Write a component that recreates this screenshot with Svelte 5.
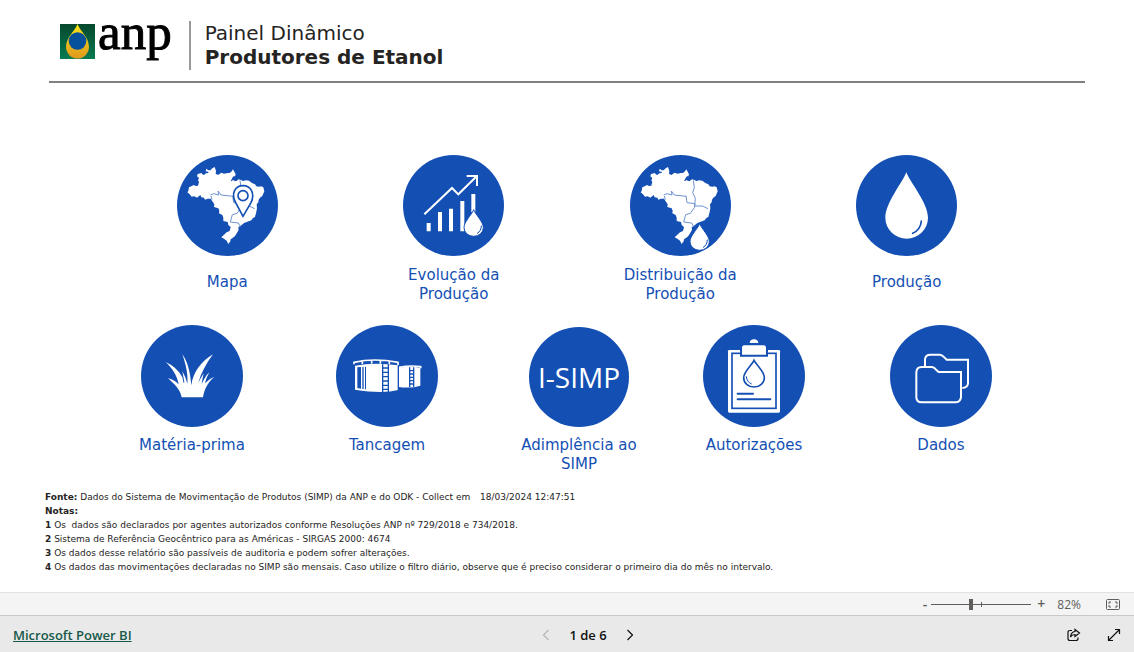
<script>
  const topItems = [
    { icon: "mapa", label: "Mapa" },
    { icon: "evolucao", label: "Evolução da Produção" },
    { icon: "distribuicao", label: "Distribuição da Produção" },
    { icon: "producao", label: "Produção" },
  ]

  const bottomItems = [
    { icon: "materia", label: "Matéria-prima" },
    { icon: "tancagem", label: "Tancagem" },
    { icon: "simp", label: "Adimplência ao SIMP" },
    { icon: "autorizacoes", label: "Autorizações" },
    { icon: "dados", label: "Dados" },
  ]

  const notes = [
    "Os \u00a0dados são declarados por agentes autorizados conforme Resoluções ANP nº 729/2018 e 734/2018.",
    "Sistema de Referência Geocêntrico para as Américas - SIRGAS 2000: 4674",
    "Os dados desse relatório são passíveis de auditoria e podem sofrer alterações.",
    "Os dados das movimentações declaradas no SIMP são mensais. Caso utilize o filtro diário, observe que é preciso considerar o primeiro dia do mês no intervalo.",
  ]

  const viewBoxes = {
    mapa: "24 30 303 303",
    evolucao: "24 30 303 303",
    distribuicao: "30 30 303 303",
    producao: "30 30 303 303",
  }

  let zoom = $state(82)
  let page = $state(1)
  const pages = 6
</script>

{#snippet brazil()}
  <path fill="#fff" d="M55 142 L58 138 L60 127 L67 124 L74 120 L80 123 L87 122 L90 111 L87 106 L90 99 L84 94 L86 87 L98 84 L100 88 L105 90 L111 85 L119 84 L117 80 L110 79 L112 71 L118 76 L124 76 L130 70 L137 66 L141 78 L140 86 L147 90 L157 83 L165 86 L176 84 L182 84 L188 79 L192 73 L196 80 L200 88 L198 94 L190 98 L191 105 L201 109 L209 103 L216 105 L222 108 L231 106 L240 107 L249 114 L258 118 L262 124 L270 125 L277 124 L283 127 L286 139 L280 153 L273 158 L269 164 L268 172 L263 178 L264 190 L262 200 L258 216 L252 219 L247 226 L233 231 L225 234 L218 240 L208 247 L209 254 L206 260 L200 270 L196 275 L185 283 L184 289 L178 297 L173 287 L165 281 L157 277 L165 269 L173 262 L182 258 L185 246 L178 240 L176 231 L163 228 L163 218 L160 210 L150 205 L151 197 L148 190 L135 186 L136 178 L131 170 L125 161 L116 161 L108 164 L105 158 L97 157 L94 150 L84 158 L76 154 L68 155 L62 148 Z"/>
  <path class="state" d="M124 150 L134 146 L149 150 L147 138 L156 150 L193 154 M191 154 L194 173 L218 176 M218 176 L216 188 L204 205 L190 209 L184 231 L208 234 L214 245 M213 106 L216 128 L211 143 L219 160 L217 183 L240 183 L257 191 M126 153 L129 164"/>
  <path fill="none" stroke="#1450b4" stroke-width="4" d="M202 92 L207 99 L201 105 L192 101 M187 108 L196 94"/>
{/snippet}

{#snippet drop()}
  <path fill="#fff" stroke="#1450b4" stroke-width="3" d="M236 194 C229 211 207 230 207 248 A29 26 0 0 0 265 248 C265 230 243 211 236 194 Z"/>
  <path fill="none" stroke="#1450b4" stroke-width="3" stroke-linecap="round" d="M259 243 Q259 258 247 265"/>
{/snippet}

{#snippet tile(item)}
  <button class="tile">
    <span class="disc" class:disc-text={item.icon == "simp"}>
      {#if item.icon == "simp"}
        <span class="simp">I-SIMP</span>
      {:else}
        <svg viewBox={viewBoxes[item.icon] || "27 29 306 306"} aria-hidden="true">
          {#if item.icon == "mapa"}
            {@render brazil()}
            <path fill="#fff" stroke="#1450b4" stroke-width="5" d="M222 214 L200 173 C185 146 198 122 222 122 S259 146 246 173 Z"/>
            <circle cx="222" cy="152" r="15" fill="#fff" stroke="#1450b4" stroke-width="5"/>
          {:else if item.icon == "evolucao"}
            <path fill="none" stroke="#fff" stroke-width="6" d="M88 208 L171 129 L190 148 L245 94 M215 93 H246 V123"/>
            <path fill="#fff" d="M95 234h12v25h-12z M129 201h12v58h-12z M162 191h12v68h-12z M196 168h12v91h-12z M229 147h12v55h-12z"/>
            {@render drop()}
          {:else if item.icon == "distribuicao"}
            <g transform="translate(7 0)">{@render brazil()}</g>
            <g transform="translate(3 42)">{@render drop()}</g>
          {:else if item.icon == "producao"}
            <path fill="#fff" d="M181 82 C170 112 118 174 118 218 A64 63 0 0 0 246 218 C246 174 192 112 181 82 Z"/>
            <path fill="none" stroke="#1450b4" stroke-width="5" stroke-linecap="round" d="M226 228 Q224 254 200 265"/>
          {:else if item.icon == "materia"}
            <path fill="#fff" d="M149 246 C145 223 126 205 108 189 Q125 192 140 207 C135 179 120 158 101 140 Q134 155 151 185 L155 204 L157 200 L151 168 Q161 184 166 205 C169 176 160 143 151 117 C169 143 175 175 178 210 C183 170 209 137 243 117 C222 145 207 174 199 202 Q209 184 215 174 Q211 190 209 207 Q219 183 232 171 Q222 188 219 204 Q231 190 247 184 C227 201 217 222 213 246 Z"/>
            <path fill="none" stroke="#fff" stroke-width="3" d="M184 206 Q187 187 197 174"/>
          {:else if item.icon == "tancagem"}
            <path fill="#fff" d="M84 151 Q142 140 214 150 V224 Q166 236 84 223 Z M215 157 Q250 151 280 157 V211 Q252 220 215 215 Z"/>
            <path fill="none" stroke="#fff" stroke-width="5" d="M81 147 V141 Q142 127 213 141 V149 M106 136V146 M134 133V145 M160 133V145 M187 135V146 M216 156 Q250 149 281 154 V159"/>
            <path fill="#1450b4" d="M91 156 L102 155 V220 L91 218Z M106 155h4v66h-4z M114 154h3v68h-3z"/>
            <path fill="none" stroke="#1450b4" stroke-width="4" d="M167 147V231 M184 147V231 M167 158H184 M167 171H184 M167 184H184 M167 197H184 M167 210H184 M167 222H184 M214 150V224 M248 156V215 M260 156V215 M248 166H260 M248 176H260 M248 186H260 M248 196H260 M248 206H260"/>
          {:else if item.icon == "autorizacoes"}
            <rect x="102" y="104" width="156" height="188" rx="4" fill="#fff"/>
            <rect x="114" y="114" width="132" height="165" fill="#fff" stroke="#1450b4" stroke-width="5"/>
            <path fill="#fff" stroke="#1450b4" stroke-width="6" d="M141 121 V98 Q141 87 151 87 H209 Q219 87 219 98 V121 Z"/>
            <path fill="#fff" d="M167 83 Q168 72 180 72 T193 83 Z"/>
            <path fill="#fff" stroke="#1450b4" stroke-width="5" d="M180 135 C174 149 149 168 149 187 A31 28 0 0 0 211 187 C211 168 187 149 180 135 Z"/>
            <path fill="none" stroke="#1450b4" stroke-width="3" d="M157 183 Q158 200 173 206"/>
            <path fill="none" stroke="#1450b4" stroke-width="6" stroke-linecap="round" d="M131 235H177 M131 252H229"/>
          {:else}
            <path fill="none" stroke="#fff" stroke-width="6" d="M132 152 V132 Q133 118 148 118 H177 Q184 119 190 126 L197 133 H261 V205 Q259 217 244 218"/>
            <path fill="none" stroke="#fff" stroke-width="6" d="M106 171 Q107 155 122 155 H153 Q160 156 166 164 L173 170 H240 V246 Q238 259 225 261 H121 Q107 260 106 246 Z"/>
          {/if}
        </svg>
      {/if}
    </span>
    <span class="label">{item.label}</span>
  </button>
{/snippet}

<div class="report">
  <header>
    <div class="logo">
      <svg width="36" height="36" viewBox="0 0 36 36" aria-hidden="true">
        <defs>
          <linearGradient id="green" x2="0" y2="1">
            <stop offset="0" stop-color="#06472d"/>
            <stop offset="1" stop-color="#087b50"/>
          </linearGradient>
          <linearGradient id="yellow" x2="0" y2="1">
            <stop offset="0" stop-color="#fce51b"/>
            <stop offset="1" stop-color="#df981e"/>
          </linearGradient>
        </defs>
        <rect width="35" height="35" fill="url(#green)"/>
        <path fill="url(#yellow)" d="M17.500 0 C15 7 6 13 6 23 A11.500 11.500 0 0 0 29 23 C29 13 20 7 17.500 0Z"/>
        <circle cx="17.500" cy="17" r="8.800" fill="#07519a"/>
      </svg>
      <span class="brand">anp</span>
    </div>
    <h1>Painel Dinâmico<strong>Produtores de Etanol</strong></h1>
  </header>

  <main>
    <nav class="row row-top" aria-label="Produção">
      {#each topItems as item}
        {@render tile(item)}
      {/each}
    </nav>
    <nav class="row row-bottom" aria-label="Informações">
      {#each bottomItems as item}
        {@render tile(item)}
      {/each}
    </nav>
    <div class="notes">
      <p><b>Fonte:</b> Dados do Sistema de Movimentação de Produtos (SIMP) da ANP e do ODK - Collect em <span class="date">18/03/2024 12:47:51</span></p>
      <p><b>Notas:</b></p>
      {#each notes as note, idx}
        <p><b>{idx + 1}</b> {note}</p>
      {/each}
    </div>
  </main>

  <div class="zoombar">
    <button class="step" aria-label="Reduzir" onclick={() => zoom -= 10}>-</button>
    <div class="slider">
      <input type="range" min="10" max="192" bind:value={zoom} aria-label="Zoom"/>
    </div>
    <button class="step" aria-label="Ampliar" onclick={() => zoom += 10}>+</button>
    <span class="percent">{zoom}%</span>
    <button aria-label="Ajustar à página">
      <svg width="14" height="11" viewBox="0 0 14 11" fill="none" stroke="#605e5c">
        <rect x=".5" y=".5" width="13" height="10" rx="1"/>
        <path d="M5 3H3V5M9 3H11V5M3 6V8H5M11 6V8H9"/>
      </svg>
    </button>
  </div>

  <footer>
    <a href="https://powerbi.microsoft.com">Microsoft Power BI</a>
    <div class="pager">
      <button aria-label="Página anterior" disabled={page == 1} onclick={() => page--}>
        <svg width="8" height="12" viewBox="0 0 8 12"><path d="M6.500 1L1.500 6L6.500 11"/></svg>
      </button>
      <span>{page} de {pages}</span>
      <button aria-label="Próxima página" disabled={page == pages} onclick={() => page++}>
        <svg width="8" height="12" viewBox="0 0 8 12"><path d="M1.500 1L6.500 6L1.500 11"/></svg>
      </button>
    </div>
    <div class="actions">
      <button aria-label="Compartilhar">
        <svg width="14" height="14" viewBox="0 0 14 14"><path d="M5 2.500H3Q1 2.500 1 4.500V10.500Q1 12.500 3 12.500H9Q11 12.500 11 10.500V9.500M8 1.500L12.500 5L8 8.500V6.500Q5 6.500 3.500 9Q4 4 8 3.500Z"/></svg>
      </button>
      <button aria-label="Tela cheia">
        <svg width="14" height="14" viewBox="0 0 14 14"><path d="M1.500 12.500L12.500 1.500M8 1.500H12.500V6M1.500 8V12.500H6"/></svg>
      </button>
    </div>
  </footer>
</div>

<style>
  :global(body) {
    background: #fff;
  }

  .report {
    display: flex;
    flex-direction: column;
    min-height: 100vh;
    color: #252423;
    font-family: Verdana, "DejaVu Sans", sans-serif;
  }

  button {
    padding: 0;
    border: none;
    background: none;
    color: inherit;
    font: inherit;
    cursor: pointer;
  }

  svg {
    display: block;
  }

  header {
    display: flex;
    align-items: flex-start;
    margin: 0 49px;
    padding: 21px 11px 11px;
    border-bottom: 2px solid #808080;
  }

  .logo {
    display: flex;
    align-items: center;
    gap: 2px;
    height: 42px;
    margin-right: 17px;
  }

  .brand {
    padding-bottom: 20px;
    color: #000;
    font-family: "Liberation Serif", serif;
    font-size: 51px;
    line-height: 60px;
    -webkit-text-stroke: 1px #000;
  }

  h1 {
    margin: 0;
    padding: 0 0 1px 14px;
    border-left: 2px solid #999;
    font-size: 20px;
    font-weight: 400;
    line-height: 24px;
  }

  h1 strong {
    display: block;
  }

  main {
    flex: 1;
  }

  .row {
    display: grid;
    color: #1450b4;
    font-size: 15px;
    line-height: 19px;
  }

  .row-top {
    grid-template-columns: repeat(4, 1fr);
    padding: 72px 114px 0;
  }

  .row-bottom {
    grid-template-columns: 194fr 196fr 188fr 162fr 212fr;
    padding: 21px 87px 0 95px;
  }

  .tile {
    display: flex;
    flex-direction: column;
    align-items: center;
  }

  .disc {
    display: flex;
    align-items: center;
    justify-content: center;
    width: 101px;
    height: 101px;
    border-radius: 50%;
    background: #1450b4;
    overflow: hidden;
  }

  .row-bottom .disc {
    width: 102px;
    height: 102px;
  }

  .row-bottom .disc-text {
    width: 100px;
    height: 100px;
    margin-top: 2px;
  }

  .disc svg {
    width: 100%;
    height: 100%;
  }

  .state {
    fill: none;
    stroke: #6f93d0;
    stroke-width: 3;
  }

  .simp {
    color: #fff;
    font: 28px "Open Sans", sans-serif;
  }

  .label {
    display: flex;
    align-items: center;
    max-width: 130px;
    min-height: 32px;
    margin-top: 10px;
  }

  .row-bottom .label {
    min-height: 19px;
    margin-top: 9px;
  }

  .notes {
    padding: 16px 45px;
    font-size: 9px;
    line-height: 14px;
  }

  .notes p {
    margin: 0;
  }

  .date {
    margin-left: 7px;
  }

  .zoombar {
    display: flex;
    align-items: center;
    justify-content: flex-end;
    box-sizing: border-box;
    height: 24px;
    padding-right: 14px;
    border-top: 1px solid #e1e1e1;
    border-bottom: 1px solid #c8c8c8;
    background: #f4f4f4;
    color: #605e5c;
    font: 12px "Open Sans", sans-serif;
  }

  .step {
    font-size: 14px;
    font-weight: 600;
    line-height: 20px;
  }

  .slider {
    position: relative;
    width: 100px;
    margin: 0 6px 0 4px;
  }

  .slider::after {
    position: absolute;
    top: 50%;
    left: 50%;
    width: 1px;
    height: 5px;
    margin-top: -2px;
    background: #605e5c;
    content: "";
  }

  input {
    display: block;
    width: 100%;
    height: 11px;
    margin: 0;
    appearance: none;
    background: linear-gradient(#605e5c, #605e5c) center / 100% 1px no-repeat;
  }

  input::-webkit-slider-thumb {
    width: 4px;
    height: 11px;
    appearance: none;
    background: #605e5c;
  }

  .percent {
    margin: 0 25px 0 12px;
  }

  footer {
    display: grid;
    grid-template-columns: 1fr auto 1fr;
    align-items: center;
    box-sizing: border-box;
    height: 36px;
    padding: 2px 13px 0;
    background: #e9e9e9;
    color: #111;
    font: 600 13px "Open Sans", sans-serif;
  }

  footer svg {
    fill: none;
    stroke: #111;
    stroke-width: 1.2;
  }

  footer button:disabled svg {
    stroke: #b5b5b5;
  }

  footer a {
    color: #16594a;
  }

  .pager {
    display: flex;
    align-items: center;
    gap: 19px;
    margin-left: 42px;
  }

  .actions {
    display: flex;
    justify-content: flex-end;
    gap: 26px;
  }
</style>
